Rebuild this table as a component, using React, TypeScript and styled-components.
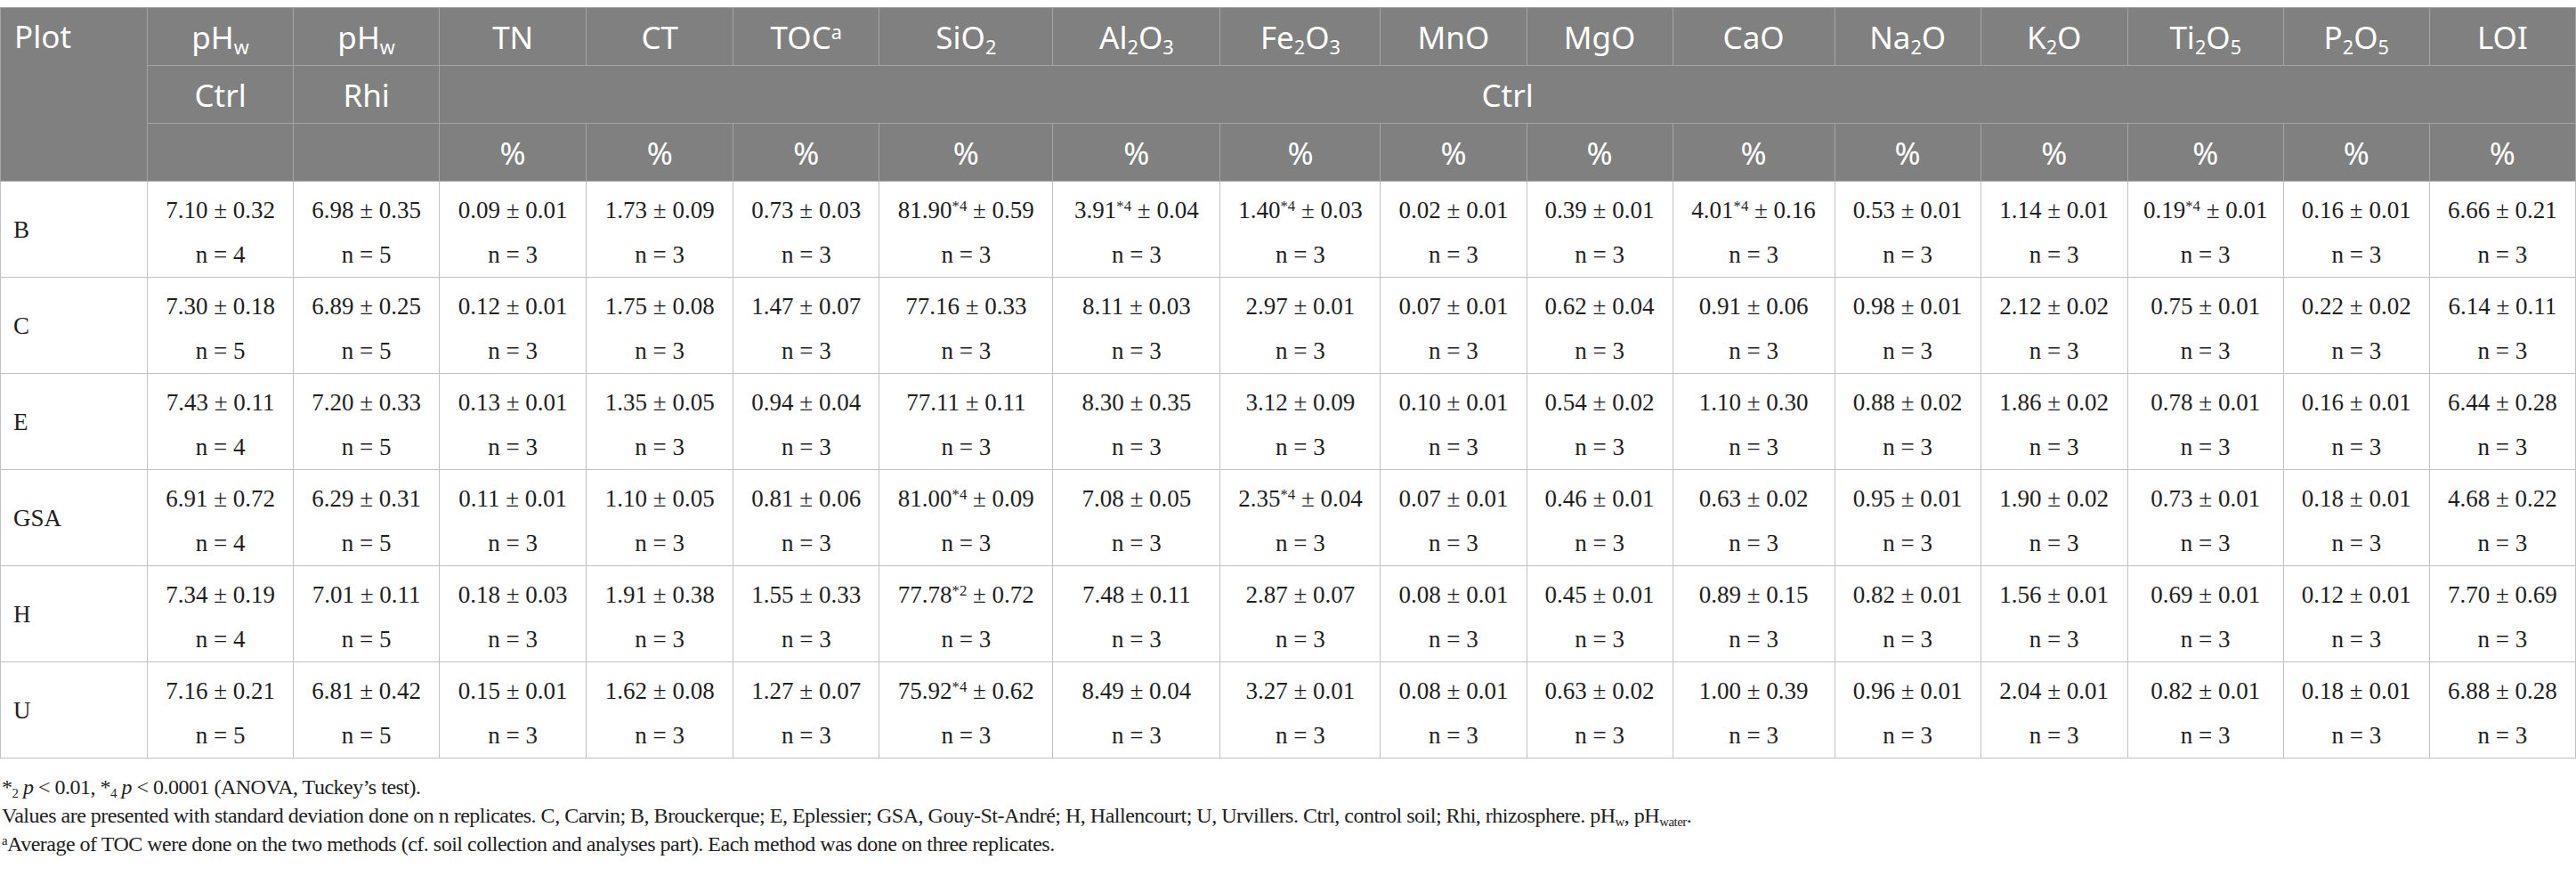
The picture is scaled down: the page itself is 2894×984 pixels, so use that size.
import React from 'react';
import styled, { createGlobalStyle } from 'styled-components';

const GlobalStyle = createGlobalStyle`
    body {
        margin: 0;
        background: #ffffff;
    }
`;

const Page = styled.div`
    padding-top: 8px;
`;

const Table = styled.table`
    width: 100%;
    border-collapse: collapse;
    table-layout: fixed;
    border: 1px solid #b9b9b9;
`;

const Col = styled.col<{ $w: number }>`
    width: ${({ $w }) => $w}px;
`;

const HeadRow = styled.tr`
    height: 65px;
`;

const HeadCell = styled.th<{ $left?: boolean; $top?: boolean }>`
    background: #808080;
    color: #ffffff;
    font-family: "Noto Sans", "Open Sans", sans-serif;
    font-size: 35px;
    font-weight: 400;
    line-height: 63px;
    padding: 0 ${({ $left }) => ($left ? '15px' : '4px')};
    text-align: ${({ $left }) => ($left ? 'left' : 'center')};
    vertical-align: ${({ $top }) => ($top ? 'top' : 'middle')};
    border: 1px solid #a4a4a4;
    white-space: nowrap;
`;

const BodyRow = styled.tr`
    height: 108px;
`;

const BodyCell = styled.td<{ $left?: boolean }>`
    font-family: "Liberation Serif", "Times New Roman", serif;
    font-size: 27px;
    line-height: 50px;
    color: #1e1e1e;
    padding: ${({ $left }) => ($left ? '0 14px' : '6px 4px 0')};
    text-align: ${({ $left }) => ($left ? 'left' : 'center')};
    vertical-align: middle;
    border: 1px solid #c2c2c2;
    white-space: nowrap;
`;

const Line = styled.div`
    display: block;
`;

const Sub = styled.sub`
    font-size: 0.62em;
    line-height: 0;
    vertical-align: -0.28em;
`;

const Sup = styled.sup`
    font-size: 0.62em;
    line-height: 0;
    vertical-align: 0.5em;
`;

const Notes = styled.div`
    font-family: "Liberation Serif", "Times New Roman", serif;
    font-size: 24px;
    letter-spacing: -0.5px;
    line-height: 32px;
    color: #1e1e1e;
    padding: 16px 2px 0;
`;

const Note = styled.p`
    margin: 0;
`;

const Ital = styled.i`
    font-style: italic;
`;

interface ICell {
    v: string;
    sd: string;
    n: number;
    sig?: string;
}

interface IRow {
    plot: string;
    cells: ICell[];
}

const c = (v: string, sd: string, n = 3, sig?: string): ICell => ({ v, sd, n, sig });

const widths = [165, 164, 164, 165, 165, 164, 195, 188, 180, 164, 164, 182, 164, 165, 175, 164, 164];

const heads: React.ReactNode[] = [
    <>pH<Sub>w</Sub></>,
    <>pH<Sub>w</Sub></>,
    'TN',
    'CT',
    <>TOC<Sup>a</Sup></>,
    <>SiO<Sub>2</Sub></>,
    <>Al<Sub>2</Sub>O<Sub>3</Sub></>,
    <>Fe<Sub>2</Sub>O<Sub>3</Sub></>,
    'MnO',
    'MgO',
    'CaO',
    <>Na<Sub>2</Sub>O</>,
    <>K<Sub>2</Sub>O</>,
    <>Ti<Sub>2</Sub>O<Sub>5</Sub></>,
    <>P<Sub>2</Sub>O<Sub>5</Sub></>,
    'LOI',
];

const rows: IRow[] = [
    {
        plot: 'B',
        cells: [
            c('7.10', '0.32', 4), c('6.98', '0.35', 5), c('0.09', '0.01'), c('1.73', '0.09'), c('0.73', '0.03'),
            c('81.90', '0.59', 3, '4'), c('3.91', '0.04', 3, '4'), c('1.40', '0.03', 3, '4'), c('0.02', '0.01'),
            c('0.39', '0.01'), c('4.01', '0.16', 3, '4'), c('0.53', '0.01'), c('1.14', '0.01'),
            c('0.19', '0.01', 3, '4'), c('0.16', '0.01'), c('6.66', '0.21'),
        ],
    },
    {
        plot: 'C',
        cells: [
            c('7.30', '0.18', 5), c('6.89', '0.25', 5), c('0.12', '0.01'), c('1.75', '0.08'), c('1.47', '0.07'),
            c('77.16', '0.33'), c('8.11', '0.03'), c('2.97', '0.01'), c('0.07', '0.01'),
            c('0.62', '0.04'), c('0.91', '0.06'), c('0.98', '0.01'), c('2.12', '0.02'),
            c('0.75', '0.01'), c('0.22', '0.02'), c('6.14', '0.11'),
        ],
    },
    {
        plot: 'E',
        cells: [
            c('7.43', '0.11', 4), c('7.20', '0.33', 5), c('0.13', '0.01'), c('1.35', '0.05'), c('0.94', '0.04'),
            c('77.11', '0.11'), c('8.30', '0.35'), c('3.12', '0.09'), c('0.10', '0.01'),
            c('0.54', '0.02'), c('1.10', '0.30'), c('0.88', '0.02'), c('1.86', '0.02'),
            c('0.78', '0.01'), c('0.16', '0.01'), c('6.44', '0.28'),
        ],
    },
    {
        plot: 'GSA',
        cells: [
            c('6.91', '0.72', 4), c('6.29', '0.31', 5), c('0.11', '0.01'), c('1.10', '0.05'), c('0.81', '0.06'),
            c('81.00', '0.09', 3, '4'), c('7.08', '0.05'), c('2.35', '0.04', 3, '4'), c('0.07', '0.01'),
            c('0.46', '0.01'), c('0.63', '0.02'), c('0.95', '0.01'), c('1.90', '0.02'),
            c('0.73', '0.01'), c('0.18', '0.01'), c('4.68', '0.22'),
        ],
    },
    {
        plot: 'H',
        cells: [
            c('7.34', '0.19', 4), c('7.01', '0.11', 5), c('0.18', '0.03'), c('1.91', '0.38'), c('1.55', '0.33'),
            c('77.78', '0.72', 3, '2'), c('7.48', '0.11'), c('2.87', '0.07'), c('0.08', '0.01'),
            c('0.45', '0.01'), c('0.89', '0.15'), c('0.82', '0.01'), c('1.56', '0.01'),
            c('0.69', '0.01'), c('0.12', '0.01'), c('7.70', '0.69'),
        ],
    },
    {
        plot: 'U',
        cells: [
            c('7.16', '0.21', 5), c('6.81', '0.42', 5), c('0.15', '0.01'), c('1.62', '0.08'), c('1.27', '0.07'),
            c('75.92', '0.62', 3, '4'), c('8.49', '0.04'), c('3.27', '0.01'), c('0.08', '0.01'),
            c('0.63', '0.02'), c('1.00', '0.39'), c('0.96', '0.01'), c('2.04', '0.01'),
            c('0.82', '0.01'), c('0.18', '0.01'), c('6.88', '0.28'),
        ],
    },
];

const App: React.FC = () => {
    return (
        <Page>
            <GlobalStyle />
            <Table>
                <colgroup>
                    {widths.map((w, i) => <Col key={i} $w={w} />)}
                </colgroup>
                <thead>
                    <HeadRow>
                        <HeadCell rowSpan={3} $left $top>Plot</HeadCell>
                        {heads.map((h, i) => <HeadCell key={i}>{h}</HeadCell>)}
                    </HeadRow>
                    <HeadRow>
                        <HeadCell>Ctrl</HeadCell>
                        <HeadCell>Rhi</HeadCell>
                        <HeadCell colSpan={14}>Ctrl</HeadCell>
                    </HeadRow>
                    <HeadRow>
                        <HeadCell />
                        <HeadCell />
                        {heads.slice(2).map((_, i) => <HeadCell key={i}>%</HeadCell>)}
                    </HeadRow>
                </thead>
                <tbody>
                    {rows.map(row => (
                        <BodyRow key={row.plot}>
                            <BodyCell $left>{row.plot}</BodyCell>
                            {row.cells.map((cell, i) => (
                                <BodyCell key={i}>
                                    <Line>
                                        {cell.v}
                                        {cell.sig && <Sup>*{cell.sig}</Sup>} ± {cell.sd}
                                    </Line>
                                    <Line>n = {cell.n}</Line>
                                </BodyCell>
                            ))}
                        </BodyRow>
                    ))}
                </tbody>
            </Table>
            <Notes>
                <Note>
                    *<Sub>2</Sub> <Ital>p</Ital> &lt; 0.01, *<Sub>4</Sub> <Ital>p</Ital> &lt; 0.0001 (ANOVA, Tuckey’s test).
                </Note>
                <Note>
                    Values are presented with standard deviation done on n replicates. C, Carvin; B, Brouckerque; E, Eplessier;
                    GSA, Gouy-St-André; H, Hallencourt; U, Urvillers. Ctrl, control soil; Rhi, rhizosphere. pH<Sub>w</Sub>, pH<Sub>water</Sub>.
                </Note>
                <Note>
                    <Sup>a</Sup>Average of TOC were done on the two methods (cf. soil collection and analyses part). Each method was done on three replicates.
                </Note>
            </Notes>
        </Page>
    );
};

export default App;
